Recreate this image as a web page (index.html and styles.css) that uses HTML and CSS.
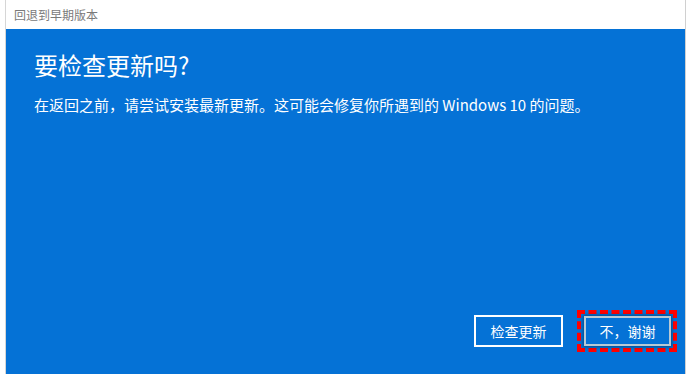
FILE: index.html
```html
<!DOCTYPE html>
<html>
<head>
  <meta charset="utf-8">
  <title>回退到早期版本</title>
  <link rel="stylesheet" href="styles.css">
</head>
<body>
  <div class="window">
    <div class="titlebar">回退到早期版本</div>
    <div class="panel">
      <h1 class="title">要检查更新吗?</h1>
      <p class="desc">在返回之前，请尝试安装最新更新。这可能会修复你所遇到的 Windows 10 的问题。</p>
      <div class="actions">
        <button class="btn">检查更新</button>
        <span class="focus-ring"><button class="btn btn-default">不，谢谢</button></span>
      </div>
    </div>
  </div>
</body>
</html>
```
FILE: styles.css
```css
html,body{
  margin: 0;
  padding: 0;
  background: #fff;
}
body{
  font-family: "Noto Sans CJK SC", "Noto Sans", sans-serif;
}
.window{
  margin-left: 5px;
  width: 681px;
  height: 374px;
  display: flex;
  flex-direction: column;
  border-left: 1px solid #d6d6d6;
  border-right: 1px solid #d0d0d0;
  box-sizing: border-box;
}
.titlebar{
  height: 29px;
  line-height: 29px;
  padding-left: 8px;
  font-size: 12px;
  color: #7a7a7a;
  background: #fff;
}
.panel{
  flex: 1;
  display: flex;
  flex-direction: column;
  background: #0572d6;
  padding: 19px 0 22px 28px;
  color: #fff;
}
.title{
  margin: 0;
  font-size: 24px;
  font-weight: normal;
  line-height: 34px;
}
.desc{
  margin: 12px 0 0;
  font-size: 15px;
  line-height: 22px;
}
.actions{
  margin-top: auto;
  display: flex;
  justify-content: flex-end;
  align-items: center;
  gap: 14px;
  padding-right: 8px;
}
.btn{
  font-family: inherit;
  font-size: 14px;
  color: #fff;
  background: transparent;
  border: 2px solid #fff;
  width: 89px;
  height: 32px;
  padding: 0;
  cursor: pointer;
}
.btn-default{
  border-color: #b8c8d4;
  width: 87px;
  height: 30px;
  box-shadow: 0 0 3px 1px rgba(0,0,0,0.35);
}
.focus-ring{
  display: inline-flex;
  border: 4px dashed #ff0000;
  padding: 2px 2px 2px 3px;
}
```
